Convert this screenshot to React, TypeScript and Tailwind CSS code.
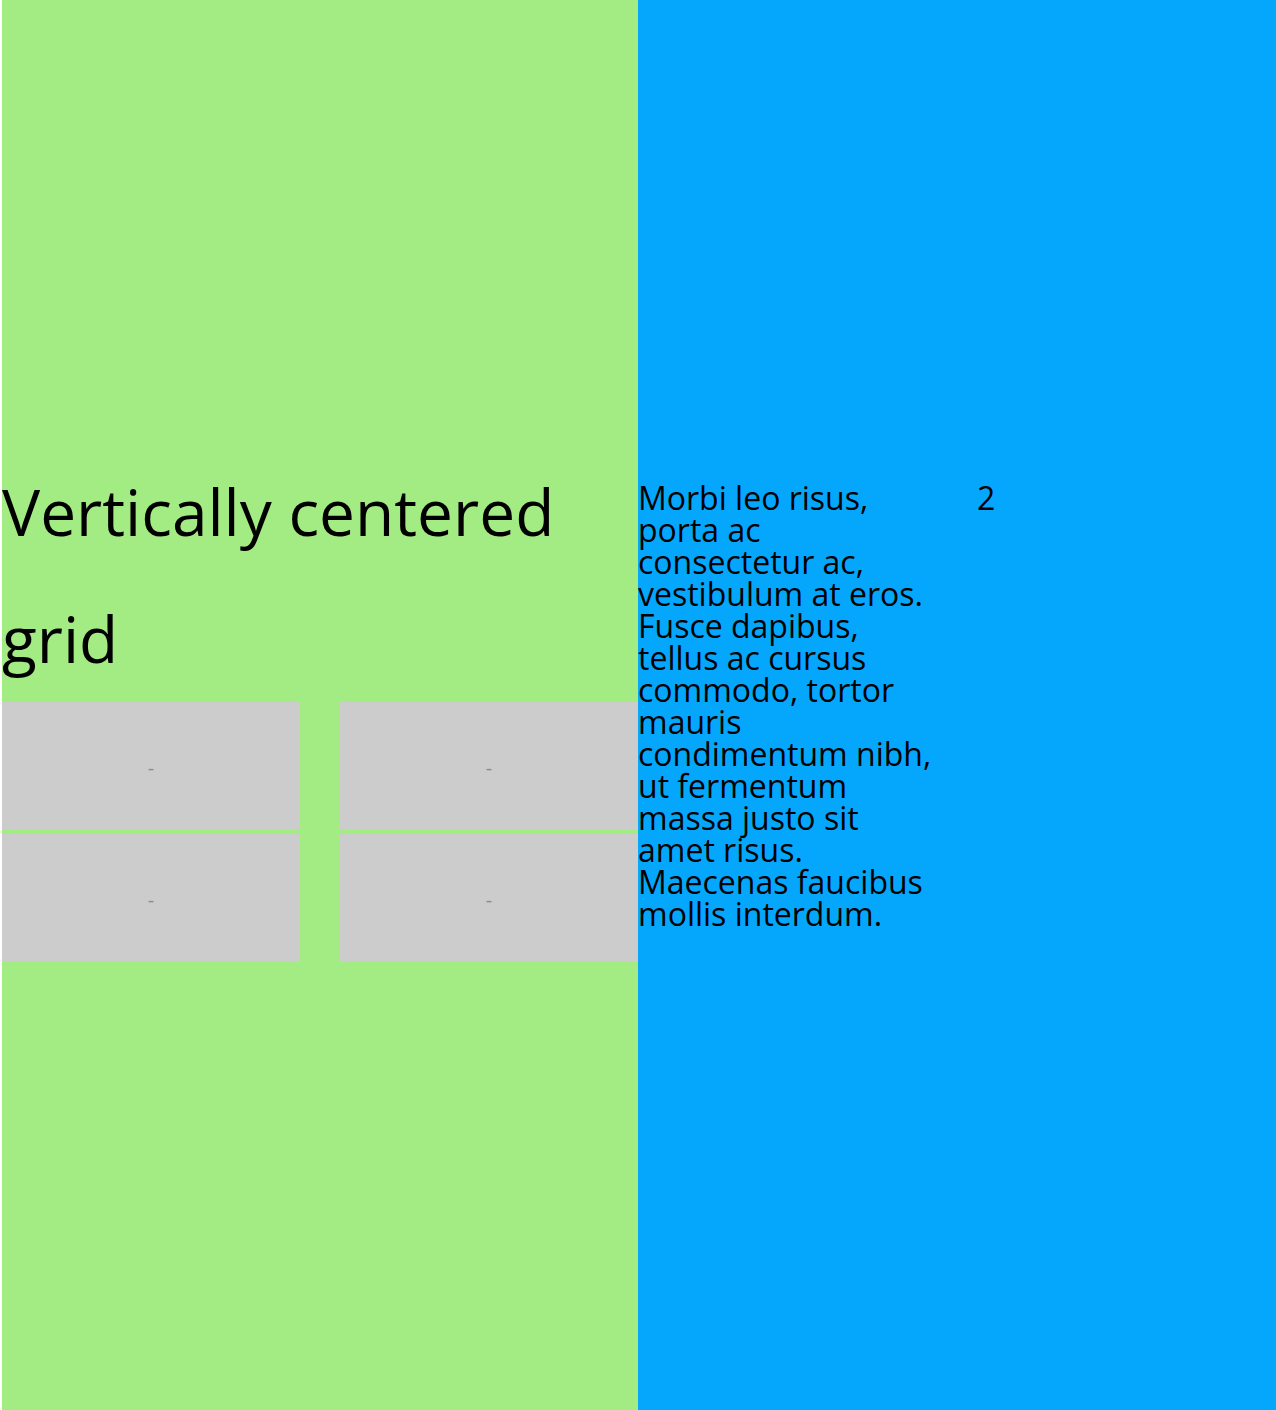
const cells = ['-', '-', '-', '-']

export default function App() {
  return (
    <div
      className="grid grid-cols-2 min-h-[1410px] bg-white text-black"
      style={{ fontFamily: '"Open Sans", "Noto Sans", sans-serif' }}
    >
      {/* left: title + box grid */}
      <section className="ml-[2px] bg-[#a3eb83] flex flex-col justify-center">
        <h1 className="text-[64px] leading-[127px] font-normal">Vertically centered grid</h1>
        <div className="grid grid-cols-2 gap-x-10 gap-y-1">
          {cells.map((c, i) => (
            <div key={i} className="h-32 bg-[#cccccc] flex items-center justify-center pt-1 text-[20px] leading-none text-[#8c8c8c]">
              {c}
            </div>
          ))}
        </div>
      </section>

      {/* right: text columns */}
      <section className="bg-[#05a7fd] flex items-center pt-[2px]">
        <div className="grid grid-cols-2 gap-x-10 w-full items-start text-[32px] leading-8">
          <p>
            Morbi leo risus, porta ac consectetur ac, vestibulum at eros. Fusce dapibus, tellus ac cursus
            commodo, tortor mauris condimentum nibh, ut fermentum massa justo sit amet risus. Maecenas faucibus
            mollis interdum.
          </p>
          <p>2</p>
        </div>
      </section>
    </div>
  )
}
